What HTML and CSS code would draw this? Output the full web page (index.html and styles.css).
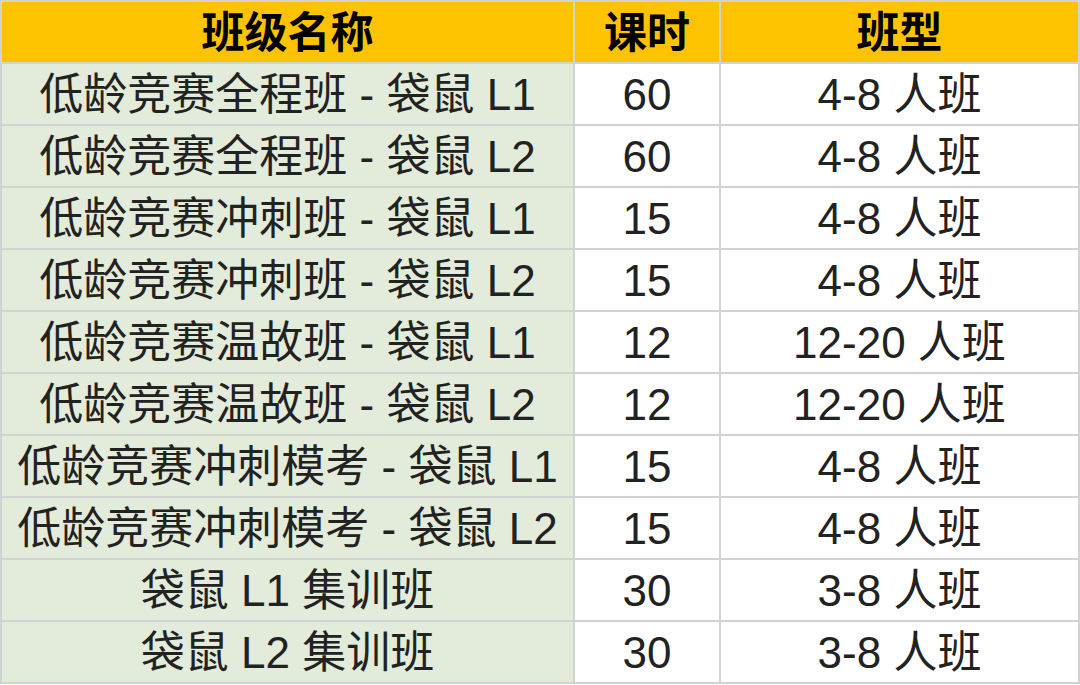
FILE: index.html
```html
<!DOCTYPE html>
<html lang="zh-CN">
<head>
<meta charset="utf-8">
<link rel="stylesheet" href="styles.css">
</head>
<body>
<table class="course-table">
  <colgroup>
    <col class="col-name">
    <col class="col-hours">
    <col class="col-type">
  </colgroup>
  <thead>
    <tr><th>班级名称</th><th>课时</th><th>班型</th></tr>
  </thead>
  <tbody>
    <tr><td class="name">低龄竞赛全程班 - 袋鼠 L1</td><td>60</td><td>4-8 人班</td></tr>
    <tr><td class="name">低龄竞赛全程班 - 袋鼠 L2</td><td>60</td><td>4-8 人班</td></tr>
    <tr><td class="name">低龄竞赛冲刺班 - 袋鼠 L1</td><td>15</td><td>4-8 人班</td></tr>
    <tr><td class="name">低龄竞赛冲刺班 - 袋鼠 L2</td><td>15</td><td>4-8 人班</td></tr>
    <tr><td class="name">低龄竞赛温故班 - 袋鼠 L1</td><td>12</td><td>12-20 人班</td></tr>
    <tr><td class="name">低龄竞赛温故班 - 袋鼠 L2</td><td>12</td><td>12-20 人班</td></tr>
    <tr><td class="name">低龄竞赛冲刺模考 - 袋鼠 L1</td><td>15</td><td>4-8 人班</td></tr>
    <tr><td class="name">低龄竞赛冲刺模考 - 袋鼠 L2</td><td>15</td><td>4-8 人班</td></tr>
    <tr><td class="name">袋鼠 L1 集训班</td><td>30</td><td>3-8 人班</td></tr>
    <tr><td class="name">袋鼠 L2 集训班</td><td>30</td><td>3-8 人班</td></tr>
  </tbody>
</table>
</body>
</html>
```
FILE: styles.css
```css
html, body {
  margin: 0;
  padding: 0;
  background: #ffffff;
}

.course-table {
  width: 1080px;
  table-layout: fixed;
  border-collapse: separate;
  border-spacing: 2px;
  background: #d2d2d2;
  font-family: "Liberation Sans", "Noto Sans CJK SC", sans-serif;
  font-size: 44px;
  color: #222222;
}

.col-name { width: 571px; }
.col-hours { width: 144px; }
.col-type { width: 357px; }

.course-table th,
.course-table td {
  height: 60px;
  padding: 2px 0 0;
  box-sizing: border-box;
  text-align: center;
  vertical-align: middle;
  line-height: 58px;
  white-space: nowrap;
  background: #ffffff;
}

.course-table th {
  background: #fdc300;
  color: #000000;
  font-weight: 700;
  font-size: 43px;
}

.course-table td.name {
  background: #e3ebda;
}
```
